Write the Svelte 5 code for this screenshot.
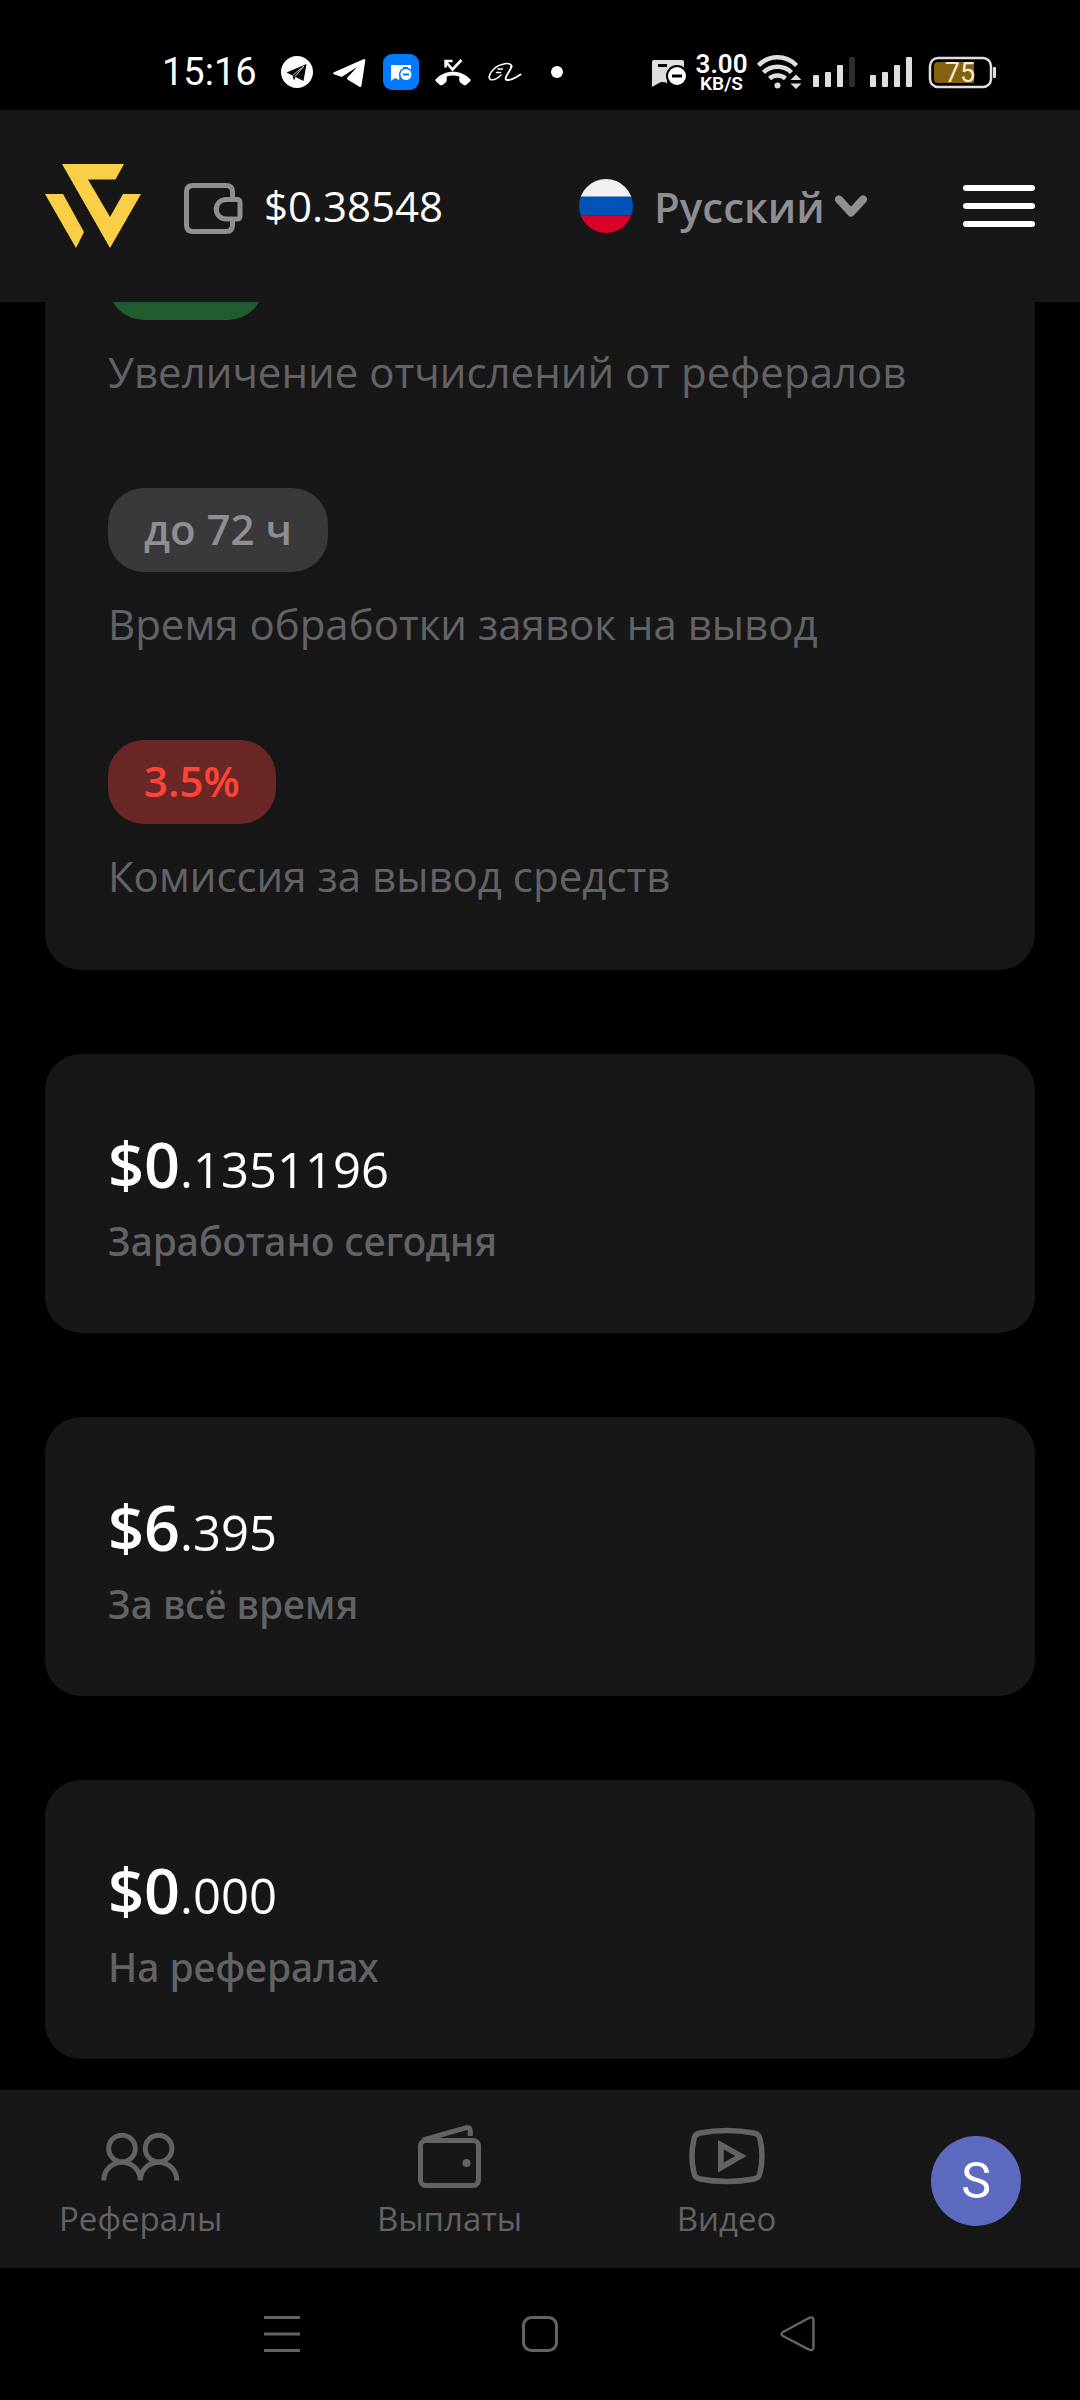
<script>
    let language = "ru";

    const balance = "$0.38548";

    const perks = [
        { badge: "", tone: "green", label: "Увеличение отчислений от рефералов" },
        { badge: "до 72 ч", tone: "grey", label: "Время обработки заявок на вывод" },
        { badge: "3.5%", tone: "red", label: "Комиссия за вывод средств" },
    ];

    const stats = [
        { whole: "$0", rest: ".1351196", label: "Заработано сегодня" },
        { whole: "$6", rest: ".395", label: "За всё время" },
        { whole: "$0", rest: ".000", label: "На рефералах" },
    ];
</script>

<div class="status">
    <span class="clock">15:16</span>
    <div class="notifications">
        <svg viewBox="0 0 36 36">
            <circle cx="18" cy="18" r="16" fill="#fff" />
            <path d="M7.500 18.500 27.500 10 24.500 27 16.500 23 15 26.500 13.500 21.500Z" fill="#000" />
            <path d="M13.500 21.500 25 12 15.800 22.800" fill="none" stroke="#fff" stroke-width=".8" />
        </svg>
        <svg viewBox="0 0 36 36">
            <path d="M2.500 18.500 33 5Q34.500 4.700 34.300 6.500L30.500 31.500Q30 34 28 32.600L16.500 25.500Q15.500 24.500 16.500 23.500L26 13 11.500 22.500Q10.500 23 9.500 22.500L2.800 20.200Q1.500 19.300 2.500 18.500Z" fill="#fff" />
        </svg>
        <svg viewBox="0 0 36 36">
            <rect width="36" height="36" rx="9" fill="#007bff" />
            <path d="M8 11h20v8H17l-1 7-4-2-4 3Z" fill="#fff" />
            <circle cx="23" cy="20.500" r="7" fill="#007bff" />
            <circle cx="23" cy="20.500" r="5.500" fill="#fff" />
            <path d="M20 20.500h6M20 14h5" stroke="#007bff" stroke-width="2" />
        </svg>
        <svg viewBox="0 0 36 36" fill="none" stroke="#fff" stroke-width="2.600">
            <path d="M26.500 6 17.500 15.500 11 8M10.600 13.500V7h7" />
            <path d="M.5 25.500C10 15.200 26 15.200 35.500 25.500Q36 26.500 35 27.500L31 31Q29.800 31.700 28.600 31L25 28.200Q24.300 27.500 24.300 26.300V22.500C20 21 16 21 11.700 22.500V26.300Q11.700 27.500 11 28.200L7.400 31Q6.200 31.700 5 31L1 27.500Q0 26.500.5 25.500Z" fill="#fff" stroke="none" />
        </svg>
        <svg viewBox="0 0 36 36" fill="none" stroke="#fff" stroke-linecap="round">
            <path d="M11 15h4.500M9.500 18.500h4M14 21Q8 27 3.500 25.500C-1 23 7 12 15 10.500 20 9 25 9 24.500 13" stroke-width="1.600" />
            <path d="M24.500 12C24 17 16.500 23.500 19 25.500 22 27 29 23.500 33.500 20.500" stroke-width="2" />
        </svg>
        <svg viewBox="0 0 36 36"><circle cx="18" cy="18" r="6" fill="#fff" /></svg>
    </div>

    <div class="system">
        <svg width="34" height="36" viewBox="0 0 34 36">
            <path d="M2 6h28q2 0 2 2v16H15v5q-5-2-8 0l-7 4V8q0-2 2-2Z" fill="#dedede" />
            <path d="M6 11.500h9" stroke="#000" stroke-width="3" />
            <circle cx="25" cy="22" r="11" fill="#000" />
            <circle cx="25" cy="22" r="9" fill="#fff" />
            <path d="M20 22h10" stroke="#000" stroke-width="3" />
        </svg>
        <div class="speed">
            <b>3.00</b>
            <small>KB/S</small>
        </div>
        <svg width="44" height="36" viewBox="0 0 44 36" fill="none" stroke="#dedede" stroke-width="4.500">
            <path d="M1.500 11.500a26 26 0 0 1 38 0M6.500 18.500a20 20 0 0 1 28 0M12.500 24.500a12 12 0 0 1 16 0" />
            <circle cx="20.500" cy="31.500" r="3" fill="#dedede" stroke="none" />
            <path d="M33.500 26 39 20.500 44.500 26ZM33.500 29.500 39 35 44.500 29.500Z" fill="#dedede" stroke="none" />
        </svg>
        {#each [true, false] as weak}
            <svg width="46" height="36" viewBox="0 0 46 36" fill="#dedede">
                <rect x="1" y="21" width="6" height="12" rx="1" />
                <rect x="13" y="18" width="6" height="15" rx="1" />
                <rect x="25" y="11" width="6" height="22" rx="1" />
                <rect x="37" y="3" width="6" height="30" rx="1" fill={weak ? "#2c2c2c" : "#dedede"} />
            </svg>
        {/each}
        <svg width="70" height="36" viewBox="0 0 70 36">
            <rect x="4" y="4" width="61" height="29" rx="8" fill="none" stroke="#dedede" stroke-width="2.500" />
            <path d="M12 8h36v21H12q-4 0-4-4V12q0-4 4-4Z" fill="#85600d" />
            <rect x="67" y="13" width="3" height="11" rx="1" fill="#dedede" />
            <text x="34" y="28" text-anchor="middle" class="charge">75</text>
        </svg>
    </div>
</div>

<header>
    <a class="logo" href="/" aria-label="W">
        <svg width="96" height="84" viewBox="0 0 96 84" fill="#f9cf47">
            <path d="M17 0H79L70.500 15.500H43L65 53 78 30H96L65 84Z" />
            <path d="M0 30H18L39 68 31 84Z" />
        </svg>
    </a>
    <a class="balance" href="/wallet">
        <svg width="60" height="60" viewBox="0 -6 60 60" fill="none" stroke="#8e8e93" stroke-width="5">
            <path d="M49.500 15V10Q49.500 3.500 43 3.500H10Q3.500 3.500 3.500 10V43Q3.500 49.500 10 49.500H43Q49.500 49.500 49.500 43V38" />
            <path d="M43 17.500H54Q57 17.500 57 20.500V34Q57 37 54 37H43A9.750 9.750 0 0 1 43 17.500Z" />
        </svg>
        {balance}
    </a>
    <label class="language">
        <svg class="flag" viewBox="0 0 54 54">
            <clipPath id="flag"><circle cx="27" cy="27" r="27" /></clipPath>
            <g clip-path="url(#flag)">
                <rect width="54" height="18" fill="#f0f0f0" />
                <rect y="17.500" width="54" height="19" fill="#0052b4" />
                <rect y="36.500" width="54" height="18" fill="#d80027" />
            </g>
        </svg>
        <select bind:value={language} aria-label="Язык">
            <option value="ru">Русский</option>
        </select>
        <svg width="32" height="22" viewBox="0 0 32 22" fill="none" stroke="#8e8e93" stroke-width="8" stroke-linecap="round" stroke-linejoin="round">
            <path d="M4 4.500 16 17.500 28 4.500" />
        </svg>
    </label>
    <button class="burger" aria-label="Меню">
        <span></span>
        <span></span>
        <span></span>
    </button>
</header>

<main>
    <section class="card perks">
        {#each perks as perk}
            <div class="perk">
                <span class="badge {perk.tone}">{perk.badge}</span>
                <p>{perk.label}</p>
            </div>
        {/each}
    </section>

    {#each stats as stat}
        <section class="card stat">
            <div class="amount"><b>{stat.whole}</b><span>{stat.rest}</span></div>
            <p>{stat.label}</p>
        </section>
    {/each}
</main>

<nav class="tabs">
    <a href="/referrals">
        <svg width="80" height="63" viewBox="0 -8 80 63" fill="none" stroke="#636366" stroke-width="5">
            <circle cx="21" cy="15.500" r="13.300" />
            <circle cx="57.600" cy="15.500" r="13.300" />
            <path d="M2.700 47.500A18.300 18.300 0 0 1 39.300 47.500 18.300 18.300 0 0 1 75.900 47.500" />
        </svg>
        Рефералы
    </a>
    <a href="/payouts">
        <svg width="63" height="63" viewBox="0 0 63 63" fill="none" stroke="#636366" stroke-width="5">
            <rect x="2.500" y="15.500" width="58" height="45" rx="5.500" />
            <path d="M5 15 48.500 2.700Q52.300 2 52.300 6V11" />
            <circle cx="48.500" cy="38" r="4" fill="#636366" stroke="none" />
        </svg>
        Выплаты
    </a>
    <a href="/video">
        <svg width="76" height="63" viewBox="0 -2 76 63">
            <path d="M11 6Q38 1 65 6 70.500 7 71.200 13 74.800 29 71.200 45 70.500 51 65 52 38 57 11 52 5.500 51 4.800 45 1.200 29 4.800 13 5.500 7 11 6Z" fill="none" stroke="#636366" stroke-width="5.500" />
            <path d="M29 13 57.500 29 29 45.500ZM34.800 22.600V35.600L46.300 29Z" fill="#636366" fill-rule="evenodd" />
        </svg>
        Видео
    </a>
    <a class="avatar" href="/profile">S</a>
</nav>

<div class="system-nav">
    <button aria-label="Недавние">
        <svg viewBox="0 0 36 36"><path d="M0 1.500h36M0 18h36M0 34.500h36" /></svg>
    </button>
    <button aria-label="Домой">
        <svg viewBox="0 0 36 36"><rect x="1.500" y="1.500" width="33" height="33" rx="8" /></svg>
    </button>
    <button aria-label="Назад">
        <svg viewBox="0 0 36 36"><path d="M29 2Q33.500 0 33.500 4.500V31Q33.500 35.500 29 33.500L3 20Q0 18 3 16Z" stroke-width="2.500" /></svg>
    </button>
</div>

<style>
    :global(body) {
        background: #000;
        color: #fff;
        font-family: "Open Sans", "Noto Sans", sans-serif;
        font-size: 42px;
    }

    a {
        color: inherit;
        text-decoration: none;
    }

    button {
        padding: 0;
        border: none;
        background: none;
    }

    p {
        margin: 0;
        color: #636366;
    }

    svg {
        display: block;
        flex: none;
    }

    .status {
        display: flex;
        align-items: center;
        box-sizing: border-box;
        height: 110px;
        padding: 34px 84px 0 162px;
    }

    .clock {
        font-family: Roboto, sans-serif;
        font-size: 38px;
        line-height: 72px;
    }

    .notifications {
        display: flex;
        gap: 16px;
        margin-left: 22px;
    }

    .notifications svg {
        width: 36px;
        height: 36px;
    }

    .system {
        display: flex;
        align-items: center;
        gap: 11px;
        margin-left: auto;
    }

    .speed {
        display: flex;
        flex-direction: column;
        align-items: center;
        width: 49px;
        padding-top: 4px;
        font-family: Roboto, sans-serif;
        line-height: 20px;
    }

    .speed b {
        font-size: 26px;
        font-weight: 600;
    }

    .speed small {
        font-size: 19px;
        font-weight: 600;
    }

    .charge {
        fill: #f4ead2;
        font-family: Roboto, sans-serif;
        font-size: 27px;
    }

    header {
        position: relative;
        z-index: 1;
        display: flex;
        align-items: center;
        height: 192px;
        padding: 0 45px;
        background: #171717;
    }

    .balance {
        display: flex;
        align-items: center;
        gap: 21px;
        margin-left: 42px;
        line-height: 56px;
    }

    .language {
        display: flex;
        align-items: center;
        margin-left: auto;
    }

    .flag {
        width: 54px;
        height: 54px;
        margin-right: 21px;
    }

    select {
        appearance: none;
        padding: 0;
        margin-right: 10px;
        border: none;
        background: none;
        color: #8e8e93;
        font: inherit;
        font-weight: 600;
    }

    .burger {
        display: flex;
        flex-direction: column;
        gap: 12px;
        width: 72px;
        margin-left: 96px;
    }

    .burger span {
        height: 6px;
        border-radius: 3px;
        background: #fff;
    }

    main {
        display: flex;
        flex-direction: column;
        gap: 84px;
        padding: 0 45px 31px;
    }

    .card {
        padding: 63px;
        border-radius: 36px;
        background: #171717;
    }

    /* scrolled partly under the header */
    .perks {
        display: flex;
        flex-direction: column;
        gap: 85px;
        margin-top: -129px;
    }

    .perk {
        display: flex;
        flex-direction: column;
        align-items: flex-start;
        gap: 20px;
    }

    .perk p {
        line-height: 63px;
    }

    .badge {
        min-width: 84px;
        height: 84px;
        padding: 0 36px;
        border-radius: 36px;
        font-weight: 600;
        line-height: 82px;
    }

    .green {
        background: #215b30;
    }

    .grey {
        background: #39393b;
        color: #8e8e93;
    }

    .red {
        background: #6a2725;
        color: #ff453a;
    }

    .stat {
        line-height: 1.5;
    }

    .amount {
        font-size: 63px;
    }

    .amount b {
        font-weight: 600;
    }

    .amount span {
        font-size: 49px;
    }

    .stat p {
        font-family: "Noto Sans", sans-serif;
        font-size: 39px;
        font-weight: 500;
    }

    .tabs {
        display: flex;
        align-items: center;
        justify-content: space-between;
        padding: 35px 59px 31px;
        background: #171717;
        color: #636366;
        font-size: 33px;
        line-height: 36px;
    }

    .tabs a {
        display: flex;
        flex-direction: column;
        align-items: center;
        gap: 13px;
    }

    .tabs .avatar {
        width: 90px;
        border-radius: 50%;
        background: #5c6bc0;
        color: #fff;
        font-family: Roboto, sans-serif;
        font-size: 50px;
        line-height: 90px;
    }

    .system-nav {
        display: flex;
        align-items: center;
        justify-content: center;
        gap: 222px;
        height: 132px;
    }

    .system-nav svg {
        width: 36px;
        height: 36px;
        fill: none;
        stroke: #636363;
        stroke-width: 3;
    }
</style>
